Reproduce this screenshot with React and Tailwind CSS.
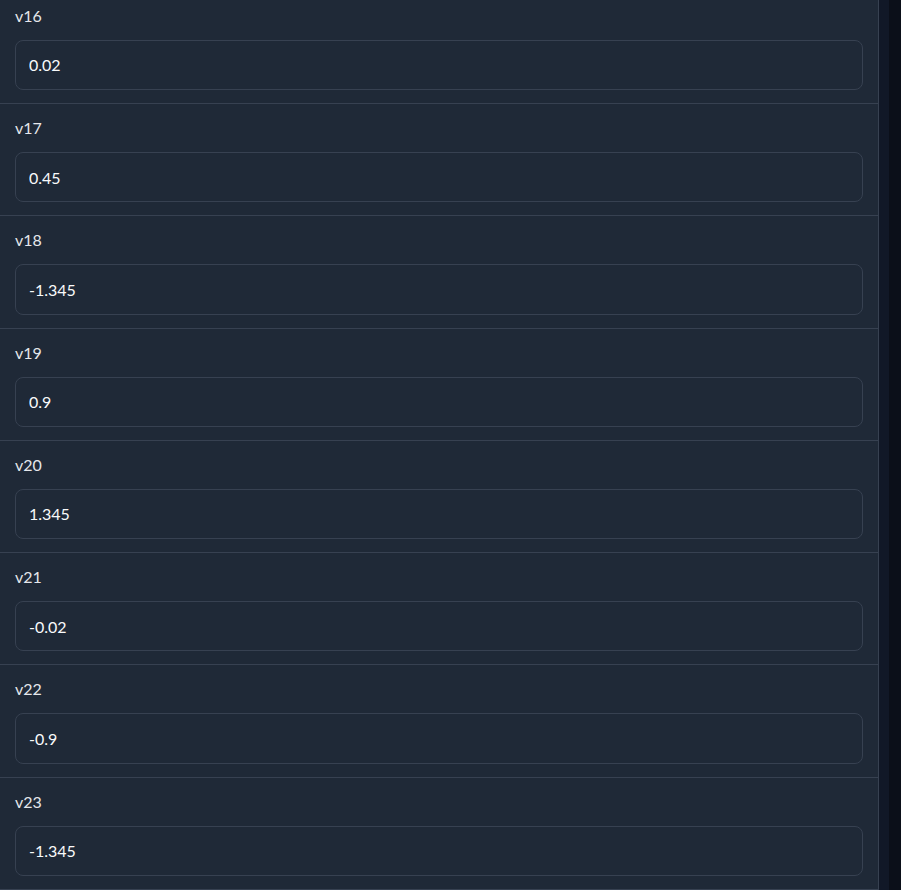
import React from "react";

const rows = [
    { name: "v16", value: "0.02" },
    { name: "v17", value: "0.45" },
    { name: "v18", value: "-1.345" },
    { name: "v19", value: "0.9" },
    { name: "v20", value: "1.345" },
    { name: "v21", value: "-0.02" },
    { name: "v22", value: "-0.9" },
    { name: "v23", value: "-1.345" },
];

const Field = ({ name, value }) => (
    <div className="border-b border-[#374151] pt-[14px] pb-[13px] px-[15px]">
        <label className="block text-[16px] leading-[20px] text-[#e5e7eb] mb-[14px]">{name}</label>
        <input
            type="text"
            defaultValue={value}
            className="block w-full h-[50.3px] rounded-[8px] border border-[#374151] bg-[#1f2937] px-[13px] text-[16px] text-[#f9fafb] outline-none"
        />
    </div>
);

export default function App() {
    return (
        <div className="flex h-[890px] w-[901px] overflow-hidden bg-[#0b0f19] font-['Lato',sans-serif]">
            <div className="w-[879px] shrink-0 border-r border-[#374151] bg-[#1f2937] overflow-hidden">
                <div className="-mt-[8.4px]">
                    {rows.map((r) => (
                        <Field key={r.name} name={r.name} value={r.value} />
                    ))}
                </div>
            </div>
            <div className="w-[10px] shrink-0 bg-[#111827]" />
        </div>
    );
}
